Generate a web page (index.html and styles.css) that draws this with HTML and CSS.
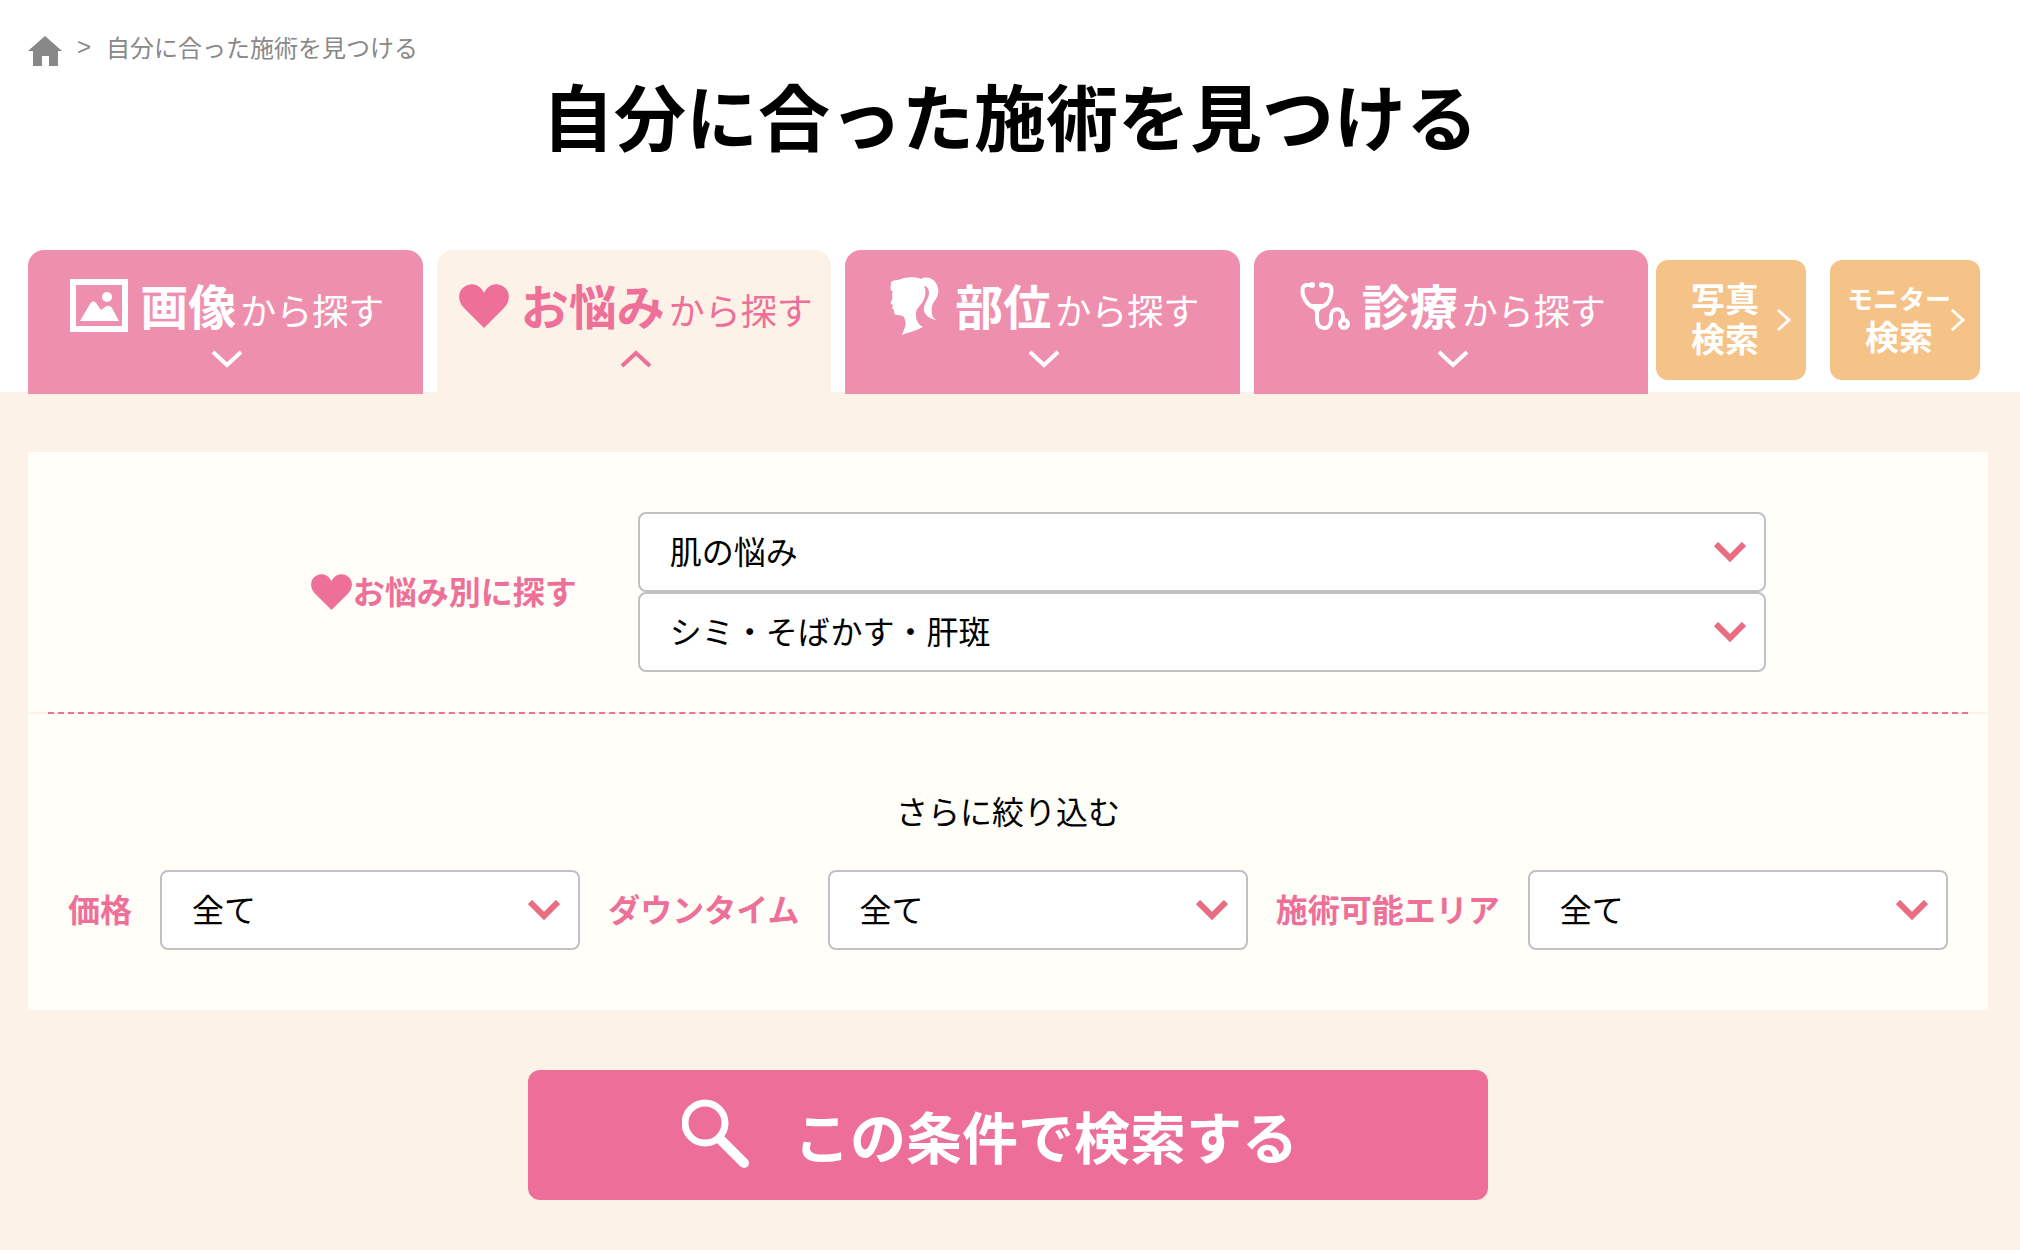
FILE: index.html
```html
<!DOCTYPE html>
<html lang="ja">
<head>
    <meta charset="UTF-8">
    <meta name="viewport" content="width=device-width, initial-scale=1.0">
    <title>自分に合った施術を見つける</title>
    <link rel="stylesheet" href="styles.css">
</head>
<body>
    <!-- Header Section -->
    <header>
        <nav class="breadcrumb">
            <a href="#" aria-label="ホーム">
                <svg class="home-icon" viewBox="0 0 34 30"><path d="M17 0 34 15H30V30H21V20H14V30H5V15H0Z"/></svg>
            </a>
            <span class="separator">&gt;</span>
            <span>自分に合った施術を見つける</span>
        </nav>
        <h1>自分に合った施術を見つける</h1>
    </header>

    <!-- Search Tabs -->
    <nav class="search-tabs">
        <div class="tab-list">
            <a href="#" class="tab">
                <span class="tab-label">
                    <svg width="58" height="54" viewBox="0 0 58 54"><path d="M3 3H55V50H3Z" fill="none" stroke="currentColor" stroke-width="6"/><circle cx="37" cy="18" r="5"/><path d="M10 42 20 25Q23 20 26 24L31 31 35 28Q39 25 42 29L49 42Z"/></svg>
                    <span><strong>画像</strong>から探す</span>
                </span>
                <svg class="tab-arrow" viewBox="0 0 32 18"><path d="M2 2 16 15 30 2"/></svg>
            </a>
            <a href="#" class="tab active">
                <span class="tab-label">
                    <svg width="50" height="44" viewBox="0 0 50 44"><path d="M25 44 5 24C-2 17-1 7 5 3C12-2 21 0 25 9C29 0 38-2 45 3C51 7 52 17 45 24Z"/></svg>
                    <span><strong>お悩み</strong>から探す</span>
                </span>
                <svg class="tab-arrow" viewBox="0 0 32 18"><path d="M2 16 16 3 30 16"/></svg>
            </a>
            <a href="#" class="tab">
                <span class="tab-label">
                    <svg width="54" height="58" viewBox="0 0 54 58"><path d="M2 8C1 4 5 3 9 3C15 0 26-1 32 2C37-1 44 1 47 6C50 11 50 17 47 22C43 27 42 31 43 36C43 40 45 41 47 43C41 42 36 38 35 34C34 27 40 22 40 16C40 12 38 9 35 9C38 15 36 21 33 26C29 31 26 33 27 40C28 45 30 48 34 50C27 54 20 55 13 58C15 52 18 48 16 43C15 38 13 39 9 38C5 38 5 36 5 33C3 32 3 30 4 28C1 27 1 26 3 23C4 19 2 17 4 15C1 13 1 10 2 8Z"/></svg>
                    <span><strong>部位</strong>から探す</span>
                </span>
                <svg class="tab-arrow" viewBox="0 0 32 18"><path d="M2 2 16 15 30 2"/></svg>
            </a>
            <a href="#" class="tab">
                <span class="tab-label">
                    <svg width="50" height="50" viewBox="0 0 50 50"><g fill="none" stroke="currentColor" stroke-width="4"><path d="M11 4H7C2 4 2 9 3 14C5 20 8 25 15 27H19C26 25 30 20 31 14C32 9 32 4 27 4H23"/><path d="M17 27V38C17 50 31 50 31 39V35C31 26 43 26 43 35V39"/><circle cx="44" cy="43" r="4"/></g><circle cx="12" cy="4" r="3"/><circle cx="22" cy="4" r="3"/><path d="M10 23H24L19 31H15Z"/></svg>
                    <span><strong>診療</strong>から探す</span>
                </span>
                <svg class="tab-arrow" viewBox="0 0 32 18"><path d="M2 2 16 15 30 2"/></svg>
            </a>
        </div>
        <div class="sub-list">
            <a href="#" class="sub-tab">
                <span>写真</span>
                <span>検索</span>
                <svg class="sub-arrow" viewBox="0 0 16 24"><path d="M2 2 13 12 2 22"/></svg>
            </a>
            <a href="#" class="sub-tab">
                <span class="small">モニター</span>
                <span>検索</span>
                <svg class="sub-arrow" viewBox="0 0 16 24"><path d="M2 2 13 12 2 22"/></svg>
            </a>
        </div>
    </nav>

    <!-- Search Form -->
    <main>
        <form>
            <div class="panel">
                <div class="trouble-row">
                    <label for="trouble" class="trouble-label">
                        <svg width="41" height="38" viewBox="0 0 50 44"><path d="M25 44 5 24C-2 17-1 7 5 3C12-2 21 0 25 9C29 0 38-2 45 3C51 7 52 17 45 24Z"/></svg>
                        <span>お悩み別に探す</span>
                    </label>
                    <div class="trouble-selects">
                        <div class="select-box">
                            <select id="trouble">
                                <option>肌の悩み</option>
                            </select>
                            <svg viewBox="0 0 32 20"><path d="M2 2 16 16 30 2"/></svg>
                        </div>
                        <div class="select-box">
                            <select aria-label="お悩みの詳細">
                                <option>シミ・そばかす・肝斑</option>
                            </select>
                            <svg viewBox="0 0 32 20"><path d="M2 2 16 16 30 2"/></svg>
                        </div>
                    </div>
                </div>

                <div class="divider"><hr></div>

                <p class="refine-title">さらに絞り込む</p>
                <div class="refine-row">
                    <label for="price">価格</label>
                    <div class="select-box">
                        <select id="price">
                            <option>全て</option>
                        </select>
                        <svg viewBox="0 0 32 20"><path d="M2 2 16 16 30 2"/></svg>
                    </div>
                    <label for="downtime">ダウンタイム</label>
                    <div class="select-box">
                        <select id="downtime">
                            <option>全て</option>
                        </select>
                        <svg viewBox="0 0 32 20"><path d="M2 2 16 16 30 2"/></svg>
                    </div>
                    <label for="area">施術可能エリア</label>
                    <div class="select-box">
                        <select id="area">
                            <option>全て</option>
                        </select>
                        <svg viewBox="0 0 32 20"><path d="M2 2 16 16 30 2"/></svg>
                    </div>
                </div>
            </div>

            <button type="submit" class="search-button">
                <svg width="68" height="70" viewBox="0 0 68 70"><circle cx="23" cy="24" r="20" fill="none" stroke="currentColor" stroke-width="7"/><path d="M39 41 62 64" fill="none" stroke="currentColor" stroke-width="10" stroke-linecap="round"/></svg>
                この条件で検索する
            </button>
        </form>
    </main>
</body>
</html>
```
FILE: styles.css
```css
/* Global Styles */
* {
    box-sizing: border-box;
}

body {
    font-family: "Noto Sans CJK JP", sans-serif;
    margin: 0;
    background: #fdf2e8;
    color: #000;
}

a {
    color: inherit;
    text-decoration: none;
}

svg {
    display: block;
    flex: none;
    fill: currentColor;
}

/* Header Section */
header {
    background: #fff;
    padding: 28px 28px 96px;
}

.breadcrumb {
    display: flex;
    align-items: center;
    gap: 15px;
    font-size: 24px;
    line-height: 36px;
    color: #888;
}

.breadcrumb .separator {
    font-family: "Liberation Sans", sans-serif;
}

.home-icon {
    width: 34px;
    height: 30px;
    margin-top: 8px;
}

h1 {
    margin: 8px 0 0;
    font-size: 72px;
    line-height: 80px;
    font-weight: bold;
    text-align: center;
}

/* Search Tabs */
.search-tabs {
    display: flex;
    gap: 8px;
    padding: 0 40px 0 28px;
    background: linear-gradient(#fff 142px, #fdf2e8 142px);
}

.tab-list {
    flex: 1;
    display: flex;
    gap: 14px;
}

.tab {
    flex: 1;
    display: flex;
    flex-direction: column;
    align-items: center;
    height: 144px;
    padding: 24px 0 0 4px;
    background: #ef8fae;
    color: #fff;
    border-radius: 16px 16px 0 0;
}

.tab.active {
    background: #fdf2e8;
    color: #ee6f98;
}

.tab-label {
    display: flex;
    align-items: center;
    gap: 12px;
    height: 64px;
    font-size: 36px;
    line-height: 64px;
    white-space: nowrap;
}

.tab-label strong {
    margin-right: 4px;
    font-size: 48px;
    font-weight: bold;
}

.tab-arrow {
    width: 32px;
    height: 18px;
    margin-top: 12px;
    fill: none;
    stroke: currentColor;
    stroke-width: 4;
}

.sub-list {
    display: flex;
    gap: 24px;
    padding-top: 10px;
}

.sub-tab {
    position: relative;
    display: flex;
    flex-direction: column;
    align-items: center;
    justify-content: center;
    width: 150px;
    height: 120px;
    padding: 0 12px 4px 0;
    background: #f5c287;
    color: #fff;
    border-radius: 12px;
    font-size: 34px;
    line-height: 40px;
    font-weight: bold;
}

.sub-tab .small {
    font-size: 26px;
    line-height: 36px;
}

.sub-arrow {
    position: absolute;
    right: 14px;
    top: 48px;
    width: 16px;
    height: 24px;
    fill: none;
    stroke: currentColor;
    stroke-width: 3;
}

/* Search Form */
main {
    padding: 58px 32px 50px 28px;
}

.panel {
    background: #fffef9;
    padding: 60px 0;
}

label {
    font-size: 32px;
    line-height: 48px;
    font-weight: bold;
    color: #ee7099;
    white-space: nowrap;
}

.trouble-row {
    display: flex;
    align-items: center;
    gap: 61px;
    padding-bottom: 40px;
}

.trouble-label {
    display: flex;
    align-items: center;
    justify-content: flex-end;
    gap: 1px;
    width: 28%;
}

.trouble-label span,
.refine-row label {
    padding-bottom: 4px;
}

.trouble-selects {
    flex: 1;
    margin-right: 222px;
}

.select-box {
    position: relative;
}

.select-box select {
    appearance: none;
    display: block;
    width: 100%;
    height: 80px;
    padding: 0 60px 4px 30px;
    font-family: inherit;
    font-size: 32px;
    color: #000;
    background: #fff;
    border: 2px solid #c1c1c3;
    border-radius: 8px;
}

.select-box svg {
    position: absolute;
    right: 20px;
    top: 30px;
    width: 32px;
    height: 20px;
    fill: none;
    stroke: #e96c80;
    stroke-width: 6;
    pointer-events: none;
}

.divider {
    padding: 0 20px;
    background: #fdf2e8;
}

.divider hr {
    margin: 0;
    border: 0;
    border-top: 2px dashed #ee7099;
}

.refine-title {
    margin: 72px 0 36px;
    font-size: 32px;
    line-height: 48px;
    text-align: center;
}

.refine-row {
    display: flex;
    align-items: center;
    gap: 28px;
    padding: 0 40px;
}

.refine-row .select-box {
    flex: 1;
}

.search-button {
    display: flex;
    align-items: center;
    justify-content: center;
    gap: 44px;
    width: 49%;
    height: 130px;
    margin: 60px auto 0;
    padding: 0 36px 2px 0;
    font-family: inherit;
    font-size: 56px;
    font-weight: bold;
    color: #fff;
    background: #ed6e98;
    border: 0;
    border-radius: 12px;
    cursor: pointer;
}
```
